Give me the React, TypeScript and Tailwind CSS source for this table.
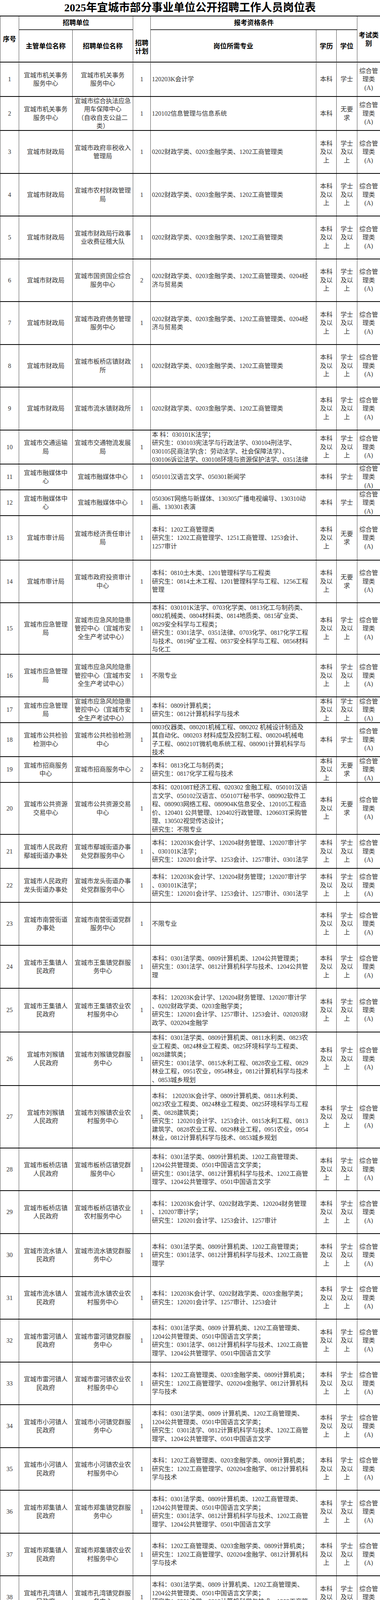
import React from "react";

type Row = {
  h: string;
  a: string;
  b: string;
  p: string;
  m: string[];
  e: string;
  d: string;
};

const BK = "本科/及以/上";
const BO = "本科";
const XS = "学士/及以/上";
const XO = "学士";
const WY = "无要/求";

const CAI3 = ["0202财政学类、0203金融学类、1202工商管理类"];
const CAI4 = ["0202财政学类、0203金融学类、1202工商管理类、0204经", "济与贸易类"];
const YJ = "宜城市应急风险隐患/管控中心（宜城市安/全生产考试中心）";

const DANG = [
  "本科：0301法学类、0809 计算机类、1202工商管理类、",
  "1204公共管理类、0501中国语言文学类；",
  "研究生：0301法学、0812计算机科学与技术、1202工商管",
  "理学、1204公共管理学、0501中国语言文学",
];
const NONG = [
  "本科：1202工商管理类、0203金融学类、0809计算机类；",
  "研究生：1202工商管理学、020204金融学、0812计算机科",
  "学与技术",
];

const rows: Row[] = [
  { h: "h-[88px]", a: "宜城市机关事务/服务中心", b: "宜城市机关事务/服务中心", p: "1", m: ["120203K会计学"], e: BO, d: XO },
  { h: "h-[87px]", a: "宜城市机关事务/服务中心", b: "宜城市综合执法应急/用车保障中心/（自收自支公益二/类）", p: "1", m: ["120102信息管理与信息系统"], e: BO, d: WY },
  { h: "h-[110px]", a: "宜城市财政局", b: "宜城市政府非税收入/管理局", p: "1", m: CAI3, e: BK, d: XS },
  { h: "h-[109px]", a: "宜城市财政局", b: "宜城市农村财政管理/局", p: "1", m: CAI3, e: BK, d: XS },
  { h: "h-[110px]", a: "宜城市财政局", b: "宜城市财政局行政事/业收费征稽大队", p: "1", m: CAI3, e: BK, d: XS },
  { h: "h-[109px]", a: "宜城市财政局", b: "宜城市国资国企综合/服务中心", p: "2", m: CAI4, e: BK, d: XS },
  { h: "h-[110px]", a: "宜城市财政局", b: "宜城市政府债务管理/服务中心", p: "1", m: CAI4, e: BK, d: XS },
  { h: "h-[109px]", a: "宜城市财政局", b: "宜城市板桥店镇财政/所", p: "1", m: CAI3, e: BK, d: XS },
  { h: "h-[110px]", a: "宜城市财政局", b: "宜城市流水镇财政所", p: "1", m: CAI3, e: BK, d: XS },
  {
    h: "h-[87px]", a: "宜城市交通运输/局", b: "宜城市交通物流发展/局", p: "1",
    m: [
      "本 科：030101K法学；",
      "研究生：030103宪法学与行政法学、030104刑法学、",
      "030105民商法学(含：劳动法学、社会保障法学）、",
      "030106诉讼法学、030108环境与资源保护法学、0351法律",
    ],
    e: BK, d: XS,
  },
  { h: "h-[66px]", a: "宜城市融媒体中/心", b: "宜城市融媒体中心", p: "1", m: ["050101汉语言文学、050301新闻学"], e: BO, d: XO },
  { h: "h-[66px]", a: "宜城市融媒体中/心", b: "宜城市融媒体中心", p: "1", m: ["050306T网络与新媒体、130305广播电视编导、130310动", "画、130301表演"], e: BO, d: XO },
  {
    h: "h-[114px]", a: "宜城市审计局", b: "宜城市经济责任审计/局", p: "1",
    m: ["本科：1202工商管理类", "研究生：1202工商管理学、1251工商管理、1253会计、", "1257审计"],
    e: BK, d: WY,
  },
  {
    h: "h-[109px]", a: "宜城市审计局", b: "宜城市政府投资审计/中心", p: "1",
    m: ["本科：0810土木类、1201管理科学与工程类", "研究生：0814土木工程、1201管理科学与工程、1256工程", "管理"],
    e: BK, d: WY,
  },
  {
    h: "h-[132px]", a: "宜城市应急管理/局", b: YJ, p: "1",
    m: [
      "本科：030101K法学、0703化学类、0813化工与制药类、",
      "0802机械类、0804材料类、0814地质类、0815矿业类、",
      "0829安全科学与工程类；",
      "研究生：0301法学、0351法律、0703化学、0817化学工程",
      "与技术、0819矿业工程、0837安全科学与工程、0856材料",
      "与化工",
    ],
    e: BK, d: XS,
  },
  { h: "h-[109px]", a: "宜城市应急管理/局", b: YJ, p: "1", m: ["不限专业"], e: BK, d: XS },
  { h: "h-[66px]", a: "宜城市应急管理/局", b: YJ, p: "1", m: ["本科：0809计算机类；", "研究生：0812计算机科学与技术"], e: BK, d: XS },
  {
    h: "h-[87px]", a: "宜城市公共检验/检测中心", b: "宜城市公共检验检测/中心", p: "1",
    m: [
      "0803仪器类、080201机械工程、080202 机械设计制造及",
      "其自动化、080203 材料成型及控制工程、080204机械电",
      "子工程、080210T微机电系统工程、080901计算机科学与",
      "技术",
    ],
    e: BO, d: XO,
  },
  { h: "h-[66px]", a: "宜城市招商服务/中心", b: "宜城市招商服务中心", p: "2", m: ["本科：0813化工与制药类；", "研究生：0817化学工程与技术"], e: BK, d: WY },
  {
    h: "h-[133px]", a: "宜城市公共资源/交易中心", b: "宜城市公共资源交易/中心", p: "1",
    m: [
      "本科：020108T经济工程、020302 金融工程、050101汉语",
      "言文学、050102汉语言、050107T秘书学、080902软件工",
      "程、080903网络工程、080904K信息安全、120105工程造",
      "价、120401 公共管理、120402行政管理、120603T采购管",
      "理、130502视觉传达设计；",
      "研究生：不限专业",
    ],
    e: BK, d: WY,
  },
  {
    h: "h-[87px]", a: "宜城市人民政府/鄢城街道办事处", b: "宜城市鄢城街道办事/处党群服务中心", p: "1",
    m: ["本科：120203K会计学、120204财务管理、120207审计学", "、030101K法学；", "研究生：120201会计学、1253会计、1257审计、0301法学"],
    e: BK, d: XS,
  },
  {
    h: "h-[87px]", a: "宜城市人民政府/龙头街道办事处", b: "宜城市龙头街道办事/处党群服务中心", p: "1",
    m: ["本科：120203K会计学、120204财务管理；120207审计学", "、030101K法学；", "研究生：120201会计学、1253会计、1257审计、0301法学"],
    e: BK, d: XS,
  },
  { h: "h-[110px]", a: "宜城市南营街道/办事处", b: "宜城市南营街道党群/服务中心", p: "1", m: ["不限专业"], e: BK, d: XS },
  {
    h: "h-[110px]", a: "宜城市王集镇人/民政府", b: "宜城市王集镇党群服/务中心", p: "1",
    m: ["本科：0301法学类、0809计算机类、1204公共管理类；", "研究生：0301法学、0812计算机科学与技术、1204公共管", "理"],
    e: BK, d: XS,
  },
  {
    h: "h-[112px]", a: "宜城市王集镇人/民政府", b: "宜城市王集镇农业农/村服务中心", p: "1",
    m: [
      "本科：120203K会计学、120204财务管理、120207审计学",
      "、0202财政学类、0203金融学类；",
      "研究生：120201会计学、1257审计、1253会计、020203财",
      "政学、020204金融学",
    ],
    e: BK, d: XS,
  },
  {
    h: "h-[137px]", a: "宜城市刘猴镇/人民政府", b: "宜城市刘猴镇党群服/务中心", p: "1",
    m: [
      "本科：0301法学类、0809计算机类、0811水利类、0823农",
      "业工程类、0824林业工程类、0825环境科学与工程类、",
      "0828建筑类；",
      "研究生：0301法学、0815水利工程、0828农业工程、0829",
      "林业工程，0951农业，0954林业，0812计算机科学与技术",
      "、0853城乡规划",
    ],
    e: BK, d: XS,
  },
  {
    h: "h-[160px]", a: "宜城市刘猴镇/人民政府", b: "宜城市刘猴镇农业农/村服务中心", p: "1",
    m: [
      "本科： 120203K会计学、0809计算机类、0811水利类、",
      "0823农业工程类、0824林业工程类、0825环境科学与工程",
      "类、0828建筑类；",
      "研究生：120201会计学、1253会计、0815水利工程、0813",
      "建筑学、0828农业工程、0829林业工程，0951农业，0954",
      "林业，0812计算机科学与技术、0853城乡规划",
    ],
    e: BK, d: XS,
  },
  {
    h: "h-[109px]", a: "宜城市板桥店镇/人民政府", b: "宜城市板桥店镇党群/服务中心", p: "1",
    m: [
      "本科：0301法学类、0809计算机类、1202工商管理类、",
      "1204公共管理类、0501中国语言文学类；",
      "研究生：0301法学、0812计算机科学与技术、1202工商管",
      "理学、1204公共管理学、0501中国语言文学",
    ],
    e: BK, d: XS,
  },
  {
    h: "h-[110px]", a: "宜城市板桥店镇/人民政府", b: "宜城市板桥店镇农业/农村服务中心", p: "1",
    m: ["本科：120203K会计学、0202财政学类、120204财务管理", "、120207审计学；", "研究生：120201会计学、1253会计、1257审计"],
    e: BK, d: XS,
  },
  {
    h: "h-[110px]", a: "宜城市流水镇人/民政府", b: "宜城市流水镇党群服/务中心", p: "1",
    m: ["本科：0301法学类、0809计算机类、1202工商管理类；", "研究生：0301法学、0812计算机科学与技术、1202工商管", "理学"],
    e: BK, d: XS,
  },
  {
    h: "h-[109px]", a: "宜城市流水镇人/民政府", b: "宜城市流水镇农业农/村服务中心", p: "1",
    m: ["本科：120203K会计学、0202财政学类、0203金融学类；", "研究生：120201会计学、1257审计、1253会计"],
    e: BK, d: XS,
  },
  { h: "h-[110px]", a: "宜城市雷河镇人/民政府", b: "宜城市雷河镇党群服/务中心", p: "1", m: DANG, e: BK, d: XS },
  { h: "h-[109px]", a: "宜城市雷河镇人/民政府", b: "宜城市雷河镇农业农/村服务中心", p: "1", m: NONG, e: BK, d: XS },
  { h: "h-[110px]", a: "宜城市小河镇人/民政府", b: "宜城市小河镇党群服/务中心", p: "1", m: DANG, e: BK, d: XS },
  { h: "h-[109px]", a: "宜城市小河镇人/民政府", b: "宜城市小河镇农业农/村服务中心", p: "1", m: NONG, e: BK, d: XS },
  {
    h: "h-[110px]", a: "宜城市郑集镇人/民政府", b: "宜城市郑集镇党群服/务中心", p: "1",
    m: [
      "本科：0301法学类、0809计算机类、1202工商管理类、",
      "1204公共管理类、0501中国语言文学类；",
      "研究生：0301法学、0812计算机科学与技术、1202工商管",
      "理学、1204公共管理学、0501中国语言文学",
    ],
    e: BK, d: XS,
  },
  { h: "h-[109px]", a: "宜城市郑集镇人/民政府", b: "宜城市郑集镇农业农/村服务中心", p: "1", m: NONG, e: BK, d: XS },
  { h: "h-[110px]", a: "宜城市孔湾镇人/民政府", b: "宜城市孔湾镇党群服/务中心", p: "1", m: DANG, e: BK, d: XS },
  { h: "h-[109px]", a: "宜城市孔湾镇人/民政府", b: "宜城市孔湾镇农业农/村服务中心", p: "1", m: NONG, e: BK, d: XS },
];

const GRID = "grid grid-cols-[48px_137px_155px_45px_424px_52px_53px_59px]";
const CELL = "min-h-0 border-r border-[#4a4a4a] flex items-center justify-center text-center overflow-hidden";

function Lines({ t }: { t: string }) {
  return (
    <div className="flex flex-col items-center">
      {t.split("/").map((l, i) => (
        <div key={i} className="h-[21.5px] whitespace-nowrap">
          {l}
        </div>
      ))}
    </div>
  );
}

export default function App() {
  return (
    <div className="w-[973px] bg-white text-[16px] leading-[21.5px] text-[#333] font-['Liberation_Serif','Noto_Sans_CJK_SC',serif]">
      <div className="h-[42px] flex items-center justify-center border-b-2 border-black text-[28px] font-bold text-black leading-none">
        2025年宜城市部分事业单位公开招聘工作人员岗位表
      </div>
      <div className={`${GRID} h-[118px] grid-rows-[35px_83px] border-b-2 border-black border-l border-l-[#4a4a4a] font-bold text-black text-[17px]`}>
        <div className={`${CELL} col-start-1 row-start-1 row-span-2`}>序号</div>
        <div className={`${CELL} col-start-2 col-span-2 row-start-1 border-b-2 border-b-[#333]`}>招聘单位</div>
        <div className={`${CELL} col-start-4 row-start-1 row-span-2 pt-[40px]`}>
          <Lines t="招聘/计划" />
        </div>
        <div className={`${CELL} col-start-5 col-span-3 row-start-1 border-b-2 border-b-[#333]`}>报考资格条件</div>
        <div className={`${CELL} col-start-8 row-start-1 row-span-2`}>
          <Lines t="考试类/别" />
        </div>
        <div className={`${CELL} col-start-2 row-start-2`}>主管单位名称</div>
        <div className={`${CELL} col-start-3 row-start-2`}>招聘单位名称</div>
        <div className={`${CELL} col-start-5 row-start-2`}>岗位所需专业</div>
        <div className={`${CELL} col-start-6 row-start-2`}>学历</div>
        <div className={`${CELL} col-start-7 row-start-2`}>学位</div>
      </div>
      {rows.map((r, i) => (
        <div key={i} className={`${GRID} grid-rows-1 ${r.h} border-b-2 border-black border-l border-l-[#4a4a4a]`}>
          <div className={CELL}>{i + 1}</div>
          <div className={CELL}>
            <Lines t={r.a} />
          </div>
          <div className={CELL}>
            <Lines t={r.b} />
          </div>
          <div className={CELL}>{r.p}</div>
          <div className="min-h-0 border-r border-[#4a4a4a] flex flex-col justify-center pl-[3px] overflow-hidden">
            {r.m.map((l, j) => (
              <div key={j} className="h-[21.5px] shrink-0 whitespace-nowrap">
                {l}
              </div>
            ))}
          </div>
          <div className={CELL}>
            <Lines t={r.e} />
          </div>
          <div className={CELL}>
            <Lines t={r.d} />
          </div>
          <div className={CELL}>
            <Lines t="综合管/理类/(A)" />
          </div>
        </div>
      ))}
      <div className="h-[2px]" />
    </div>
  );
}
